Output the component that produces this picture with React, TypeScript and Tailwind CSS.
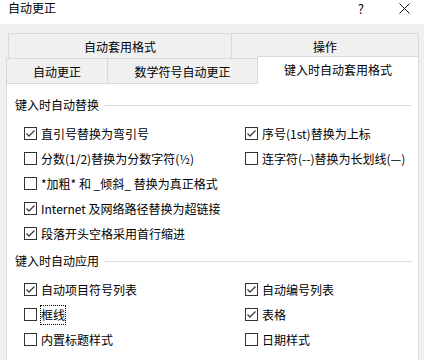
import React from 'react';

const font = { fontFamily: '"Noto Sans CJK SC", "Microsoft YaHei", sans-serif' };

type Item = { label: string; checked: boolean; focus?: boolean };

const replaceRows: [Item, Item | null][] = [
  [{ label: '直引号替换为弯引号', checked: true }, { label: '序号(1st)替换为上标', checked: true }],
  [{ label: '分数(1/2)替换为分数字符(½)', checked: false }, { label: '连字符(--)替换为长划线(—)', checked: false }],
  [{ label: '*加粗* 和 _倾斜_ 替换为真正格式', checked: false }, null],
  [{ label: 'Internet 及网络路径替换为超链接', checked: true }, null],
  [{ label: '段落开头空格采用首行缩进', checked: true }, null],
];

const applyRows: [Item, Item | null][] = [
  [{ label: '自动项目符号列表', checked: true }, { label: '自动编号列表', checked: true }],
  [{ label: '框线', checked: false, focus: true }, { label: '表格', checked: true }],
  [{ label: '内置标题样式', checked: false }, { label: '日期样式', checked: false }],
];

const CheckBox: React.FC<{ item: Item }> = ({ item }) => (
  <div className="flex items-center gap-[3px] h-[25px]">
    <div className="w-[13px] h-[13px] border border-[#333333] bg-white shrink-0 flex items-center justify-center">
      {item.checked && (
        <svg width="11" height="11" viewBox="0 0 11 11">
          <polyline points="1.5,5.5 4,8 9.5,2.5" fill="none" stroke="#3c3c3c" strokeWidth="1.3" />
        </svg>
      )}
    </div>
    <span
      className={
        'border leading-[18px] text-[12px] text-black whitespace-nowrap ' +
        (item.focus ? 'border-dotted border-black' : 'border-transparent')
      }
    >
      {item.label}
    </span>
  </div>
);

const GroupHeader: React.FC<{ title: string }> = ({ title }) => (
  <div className="flex items-center h-[16px] pl-[8px] pr-[6px]">
    <span className="text-[12px] leading-[16px] text-black">{title}</span>
    <div className="flex-1 h-px bg-[#dcdcdc] ml-[5px]" />
  </div>
);

const Rows: React.FC<{ rows: [Item, Item | null][] }> = ({ rows }) => (
  <div className="flex flex-col pl-[17px]">
    {rows.map((r, i) => (
      <div key={i} className="grid grid-cols-[221px_1fr]">
        <CheckBox item={r[0]} />
        <div>{r[1] && <CheckBox item={r[1]} />}</div>
      </div>
    ))}
  </div>
);

const App: React.FC = () => {
  return (
    <div className="w-[424px] h-[360px] bg-[#f0f0f0] overflow-hidden flex flex-col" style={font}>
      {/* Title bar */}
      <header className="h-[24px] bg-white flex items-start shrink-0">
        <span className="pl-[8px] text-[12px] leading-[16px] text-black">自动更正</span>
        <span className="ml-auto text-[13px] leading-[17px] text-black">?</span>
        <div className="ml-[35px] mr-[14px] mt-[3px]">
          <svg width="11" height="11" viewBox="0 0 11 11">
            <path d="M0.5 0.5 L10.5 10.5 M10.5 0.5 L0.5 10.5" stroke="#111" strokeWidth="1" />
          </svg>
        </div>
      </header>

      <div className="pl-[6px] pt-[9px] w-[419px] flex flex-col">
        {/* Tab row 1 */}
        <div className="flex ml-[2px] h-[25px] text-[12px] text-black">
          <div className="w-[223px] border-t border-l border-[#d9d9d9] flex items-center justify-center pt-[2px]">
            自动套用格式
          </div>
          <div className="w-[188px] border-t border-l border-r border-[#d9d9d9] flex items-center justify-center pt-[2px]">
            操作
          </div>
        </div>
        {/* Tab row 2 */}
        <div className="flex items-end h-[25px] text-[12px] text-black relative z-10">
          <div className="w-[101px] h-[25px] border-t border-l border-[#d9d9d9] flex items-center justify-center pt-[1px]">
            自动更正
          </div>
          <div className="w-[150px] h-[25px] border-t border-l border-[#d9d9d9] flex items-center justify-center pt-[1px]">
            数学符号自动更正
          </div>
          <div className="w-[162px] h-[28px] -mb-px border-t border-l border-r border-[#d9d9d9] bg-white flex items-center justify-center pb-[1px]">
            键入时自动套用格式
          </div>
        </div>
        {/* Panel */}
        <div className="w-[413px] h-[300px] border border-[#d9d9d9] bg-white pt-[13px] flex flex-col">
          <GroupHeader title="键入时自动替换" />
          <div className="mt-[8px]">
            <Rows rows={replaceRows} />
          </div>
          <div className="mt-[7px]">
            <GroupHeader title="键入时自动应用" />
          </div>
          <div className="mt-[8px]">
            <Rows rows={applyRows} />
          </div>
        </div>
      </div>
    </div>
  );
};

export default App;
